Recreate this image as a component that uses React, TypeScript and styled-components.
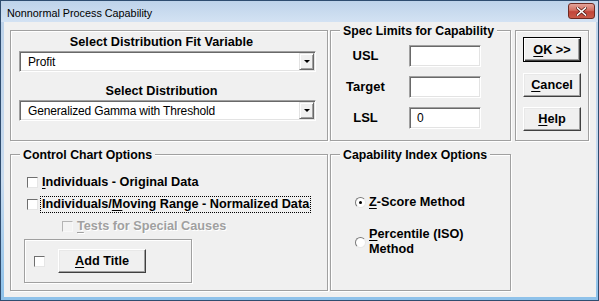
import React from "react";
import styled, { createGlobalStyle, css } from "styled-components";

const GlobalStyle = createGlobalStyle`
  html, body { margin: 0; padding: 0; background: #fff; }
  body { font-family: "Liberation Sans", Arial, sans-serif; color: #000; }
`;

const Window = styled.div`
  width: 599px;
  height: 301px;
  box-sizing: border-box;
  border: 1px solid #2f4d70;
  background: linear-gradient(#bcd2ea, #c8dbef 60%, #8fc2ea 98%);
  display: flex;
  flex-direction: column;
`;

const TitleBar = styled.div`
  height: 21px;
  flex: none;
  display: flex;
  align-items: flex-start;
  justify-content: space-between;
  padding: 0 3px 0 6px;
  background: linear-gradient(#bed3ea, #d3e2f3);
`;

const Title = styled.span`
  font-family: "Liberation Sans", Arial, sans-serif;
  font-size: 10.8px;
  line-height: 14px;
  padding-top: 5px;
  color: #000;
`;

const CloseButton = styled.div`
  margin-top: 2px;
  width: 27px;
  height: 16px;
  box-sizing: border-box;
  border: 1px solid #6e2a22;
  border-radius: 3px;
  background: linear-gradient(#e4a49a, #d26e60 45%, #c2453a 55%, #c95a48);
  display: flex;
  align-items: center;
  justify-content: center;
`;

const Client = styled.div`
  flex: 1;
  margin: 0 2px 3px 3px;
  background: #f0f0f0;
  padding: 8px 0 0 6px;
  display: grid;
  grid-template-columns: 318px 181px 76px;
  grid-template-rows: 111px 137px;
  column-gap: 2px;
  row-gap: 13px;
  align-content: start;
`;

const Group = styled.div`
  position: relative;
  box-sizing: border-box;
  border: 1px solid #a0a0a0;
  box-shadow: inset 1px 1px 0 #fff, 1px 1px 0 #fff;
`;

const Legend = styled.span`
  position: absolute;
  top: -7px;
  left: 9px;
  padding: 0 3px;
  background: #f0f0f0;
  font-weight: bold;
  font-size: 12.3px;
  line-height: 15px;
  white-space: nowrap;
`;

/* ---------- distribution fit ---------- */
const FitGroup = styled(Group)`
  display: flex;
  flex-direction: column;
  padding: 3px 11px 0 8px;
`;

const Heading = styled.div<{ $gap?: number }>`
  height: 16px;
  line-height: 16px;
  margin-top: ${(p) => p.$gap ?? 0}px;
  padding-right: 12px;
  text-align: center;
  font-weight: bold;
  font-size: 12.7px;
  white-space: nowrap;
`;

const sunken = css`
  border: 1px solid;
  border-color: #a0a0a0 #fff #fff #a0a0a0;
  box-shadow: inset 1px 1px 0 #696969, inset -1px -1px 0 #e3e3e3;
  background: #fff;
`;

const Combo = styled.div`
  ${sunken};
  box-sizing: border-box;
  height: 21px;
  margin-top: 1px;
  display: flex;
  align-items: center;
  padding: 0 1px 0 8px;
`;

const ComboValue = styled.span`
  flex: 1;
  font-size: 12px;
  letter-spacing: -0.15px;
  white-space: nowrap;
`;

const DropButton = styled.span`
  width: 15px;
  height: 17px;
  box-sizing: border-box;
  background: #f0f0f0;
  border: 1px solid;
  border-color: #e3e3e3 #696969 #696969 #e3e3e3;
  box-shadow: inset 1px 1px 0 #fff, inset -1px -1px 0 #a0a0a0;
  display: flex;
  align-items: center;
  justify-content: center;
`;

const Arrow = styled.span`
  width: 0;
  height: 0;
  border-left: 3px solid transparent;
  border-right: 3px solid transparent;
  border-top: 3px solid #000;
  margin-left: 1px;
`;

/* ---------- spec limits ---------- */
const SpecGrid = styled(Group)`
  display: grid;
  grid-template-columns: 55px 72px;
  grid-auto-rows: 22px;
  column-gap: 16px;
  row-gap: 9px;
  padding: 14px 0 0 7px;
  align-content: start;
`;

const SpecLabel = styled.span`
  text-align: center;
  line-height: 22px;
  font-weight: bold;
  font-size: 13px;
`;

const TextBox = styled.input`
  ${sunken};
  box-sizing: border-box;
  width: 72px;
  height: 22px;
  margin: 0;
  padding: 0 0 0 7px;
  font-family: "Liberation Sans", Arial, sans-serif;
  font-size: 12px;
  outline: none;
`;

/* ---------- buttons ---------- */
const ButtonGroup = styled(Group)`
  justify-self: end;
  width: 74px;
  display: flex;
  flex-direction: column;
  padding: 6px 0 0 7px;
`;

const DialogButton = styled.button<{ $default?: boolean; $w?: number; $h?: number; $mt?: number }>`
  box-sizing: border-box;
  width: ${(p) => p.$w ?? 58}px;
  height: ${(p) => p.$h ?? 24}px;
  margin: ${(p) => p.$mt ?? 0}px 0 0 0;
  padding: 0;
  background: #f0f0f0;
  color: #000;
  font-family: "Liberation Sans", Arial, sans-serif;
  font-weight: bold;
  font-size: 12.7px;
  border: 1px solid;
  border-color: #fff #404040 #404040 #fff;
  box-shadow: inset -1px -1px 0 #a0a0a0, inset 1px 1px 0 #e8e8e8;
  ${(p) =>
    p.$default &&
    css`
      border-color: #000;
      box-shadow: inset 1px 1px 0 #fff, inset -1px -1px 0 #404040, inset -2px -2px 0 #a0a0a0;
    `}
`;

const Key = styled.span`
  text-decoration: underline;
  text-underline-offset: 2px;
`;

/* ---------- control chart ---------- */
const ControlGroup = styled(Group)`
  display: flex;
  flex-direction: column;
  gap: 2px;
  padding: 17px 0 0 0;
`;

const OptionRow = styled.div<{ $indent: number }>`
  height: 20px;
  display: flex;
  align-items: center;
  gap: 2px;
  padding-left: ${(p) => p.$indent}px;
`;

const CheckBox = styled.span<{ $disabled?: boolean }>`
  flex: none;
  box-sizing: border-box;
  width: 11px;
  height: 11px;
  border: 1px solid;
  border-color: #6f6f6f #e6e6e6 #e6e6e6 #6f6f6f;
  background: #fff;
  ${(p) =>
    p.$disabled &&
    css`
      border-color: #b4b4b4 #f8f8f8 #f8f8f8 #b4b4b4;
      background: #f3f3f3;
    `}
`;

const OptionLabel = styled.span<{ $focused?: boolean; $disabled?: boolean }>`
  border: 1px dotted ${(p) => (p.$focused ? "#000" : "transparent")};
  padding: 0 1px;
  line-height: 15px;
  font-weight: bold;
  font-size: 12.7px;
  white-space: nowrap;
  ${(p) =>
    p.$disabled &&
    css`
      color: #a0a0a0;
      text-shadow: 1px 1px 0 #fff;
    `}
`;

const TitleBox = styled(Group)`
  margin: 1px 0 0 13px;
  width: 168px;
  height: 44px;
  display: flex;
  align-items: center;
  gap: 13px;
  padding-left: 9px;
`;

/* ---------- capability ---------- */
const CapabilityGroup = styled(Group)`
  display: flex;
  flex-direction: column;
  gap: 17px;
  padding: 40px 0 0 24px;
`;

const RadioRow = styled.div`
  display: flex;
  align-items: center;
  gap: 3px;
`;

const Radio = styled.span<{ $checked?: boolean }>`
  flex: none;
  box-sizing: border-box;
  width: 11px;
  height: 11px;
  border-radius: 50%;
  border: 1px solid;
  border-color: #7a7a7a #e8e8e8 #e8e8e8 #7a7a7a;
  background: #fff;
  display: flex;
  align-items: center;
  justify-content: center;
  &::after {
    content: "";
    width: 3px;
    height: 3px;
    border-radius: 50%;
    background: ${(p) => (p.$checked ? "#000" : "transparent")};
  }
`;

const RadioLabel = styled.span`
  display: flex;
  flex-direction: column;
  line-height: 15px;
  font-weight: bold;
  font-size: 12.7px;
  white-space: nowrap;
`;

const LabelLine = styled.span`
  display: block;
`;

export default function App() {
  return (
    <>
      <GlobalStyle />
      <Window>
        <TitleBar>
          <Title>Nonnormal Process Capability</Title>
          <CloseButton>
            <svg width="11" height="9" viewBox="0 0 11 9">
              <path d="M1.5 1 L9.5 8 M9.5 1 L1.5 8" stroke="#5a1d16" strokeWidth="3" strokeLinecap="square" />
              <path d="M1.5 1 L9.5 8 M9.5 1 L1.5 8" stroke="#fff" strokeWidth="1.6" strokeLinecap="square" />
            </svg>
          </CloseButton>
        </TitleBar>
        <Client>
          <FitGroup>
            <Heading>Select Distribution Fit Variable</Heading>
            <Combo>
              <ComboValue>Profit</ComboValue>
              <DropButton>
                <Arrow />
              </DropButton>
            </Combo>
            <Heading $gap={11}>Select Distribution</Heading>
            <Combo>
              <ComboValue>Generalized Gamma with Threshold</ComboValue>
              <DropButton>
                <Arrow />
              </DropButton>
            </Combo>
          </FitGroup>

          <SpecGrid>
            <Legend>Spec Limits for Capability</Legend>
            <SpecLabel>USL</SpecLabel>
            <TextBox defaultValue="" />
            <SpecLabel>Target</SpecLabel>
            <TextBox defaultValue="" />
            <SpecLabel>LSL</SpecLabel>
            <TextBox defaultValue="0" />
          </SpecGrid>

          <ButtonGroup>
            <DialogButton $default $h={25}>
              <Key>O</Key>K &gt;&gt;
            </DialogButton>
            <DialogButton $mt={11}>
              <Key>C</Key>ancel
            </DialogButton>
            <DialogButton $mt={10}>
              <Key>H</Key>elp
            </DialogButton>
          </ButtonGroup>

          <ControlGroup>
            <Legend>Control Chart Options</Legend>
            <OptionRow $indent={16}>
              <CheckBox />
              <OptionLabel>
                <Key>I</Key>ndividuals - Original Data
              </OptionLabel>
            </OptionRow>
            <OptionRow $indent={16}>
              <CheckBox />
              <OptionLabel $focused>
                Individuals/<Key>M</Key>oving Range - Normalized Data
              </OptionLabel>
            </OptionRow>
            <OptionRow $indent={51}>
              <CheckBox $disabled />
              <OptionLabel $disabled>
                <Key>T</Key>ests for Special Causes
              </OptionLabel>
            </OptionRow>
            <TitleBox>
              <CheckBox />
              <DialogButton $w={88}>
                <Key>A</Key>dd Title
              </DialogButton>
            </TitleBox>
          </ControlGroup>

          <CapabilityGroup>
            <Legend>Capability Index Options</Legend>
            <RadioRow>
              <Radio $checked />
              <RadioLabel>
                <LabelLine>
                  <Key>Z</Key>-Score Method
                </LabelLine>
              </RadioLabel>
            </RadioRow>
            <RadioRow>
              <Radio />
              <RadioLabel>
                <LabelLine>
                  <Key>P</Key>ercentile (ISO)
                </LabelLine>
                <LabelLine>Method</LabelLine>
              </RadioLabel>
            </RadioRow>
          </CapabilityGroup>
        </Client>
      </Window>
    </>
  );
}
